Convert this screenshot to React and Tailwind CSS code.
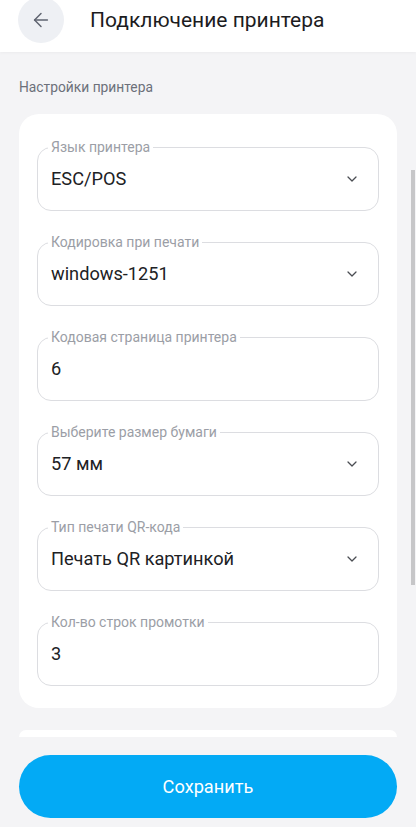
import React from "react";
import { ArrowLeft, ChevronDown } from "lucide-react";

const fields = [
    { label: "Язык принтера", value: "ESC/POS", select: true },
    { label: "Кодировка при печати", value: "windows-1251", select: true },
    { label: "Кодовая страница принтера", value: "6", select: false },
    { label: "Выберите размер бумаги", value: "57 мм", select: true },
    { label: "Тип печати QR-кода", value: "Печать QR картинкой", select: true },
    { label: "Кол-во строк промотки", value: "3", select: false },
];

const Field = ({ label, value, select }) => (
    <div className="relative h-[64px] rounded-[14px] border border-[#dcdde1] flex items-center pl-[13px] pr-[18px]">
        <span className="absolute -top-[10px] left-[10px] bg-white px-[3px] text-[14px] leading-[18px] text-[#9b9ea6]">
            {label}
        </span>
        <span className="flex-1 text-[18.2px] text-[#202124]">{value}</span>
        {select && <ChevronDown size={16} strokeWidth={1.9} className="text-[#4a4d52]" />}
    </div>
);

const App = () => {
    return (
        <div className="relative h-[827px] w-[416px] overflow-hidden bg-[#f4f4f6] font-['Roboto',sans-serif]">
            <div className="h-[52px] bg-white flex items-center shadow-[0_1px_3px_rgba(0,0,0,0.04)]">
                <div className="ml-[18px] -mt-[12px] w-[46px] h-[46px] rounded-full bg-[#eef0f4] flex items-center justify-center">
                    <ArrowLeft size={22} strokeWidth={1.6} className="text-[#5f6470]" />
                </div>
                <h1 className="ml-[26px] -mt-[10px] text-[21px] text-[#1c1c1e]">Подключение принтера</h1>
            </div>

            <div className="px-[19px]">
                <p className="mt-[26px] text-[13.8px] leading-[18px] text-[#6c707a]">Настройки принтера</p>

                <div className="mt-[18px] bg-white rounded-[20px] px-[18px] pt-[33px] pb-[22px] flex flex-col gap-[31px]">
                    {fields.map((f) => (
                        <Field key={f.label} {...f} />
                    ))}
                </div>

                <div className="mt-[22px] h-[7px] bg-white rounded-t-[20px]"></div>

                <button className="mt-[18px] w-full h-[63px] rounded-full bg-[#03aaf5] text-white text-[18.2px]">
                    Сохранить
                </button>
            </div>

            <div className="absolute right-[1px] top-[170px] w-[4px] h-[415px] bg-[#c6c6c8]"></div>
        </div>
    );
};

export default App;
